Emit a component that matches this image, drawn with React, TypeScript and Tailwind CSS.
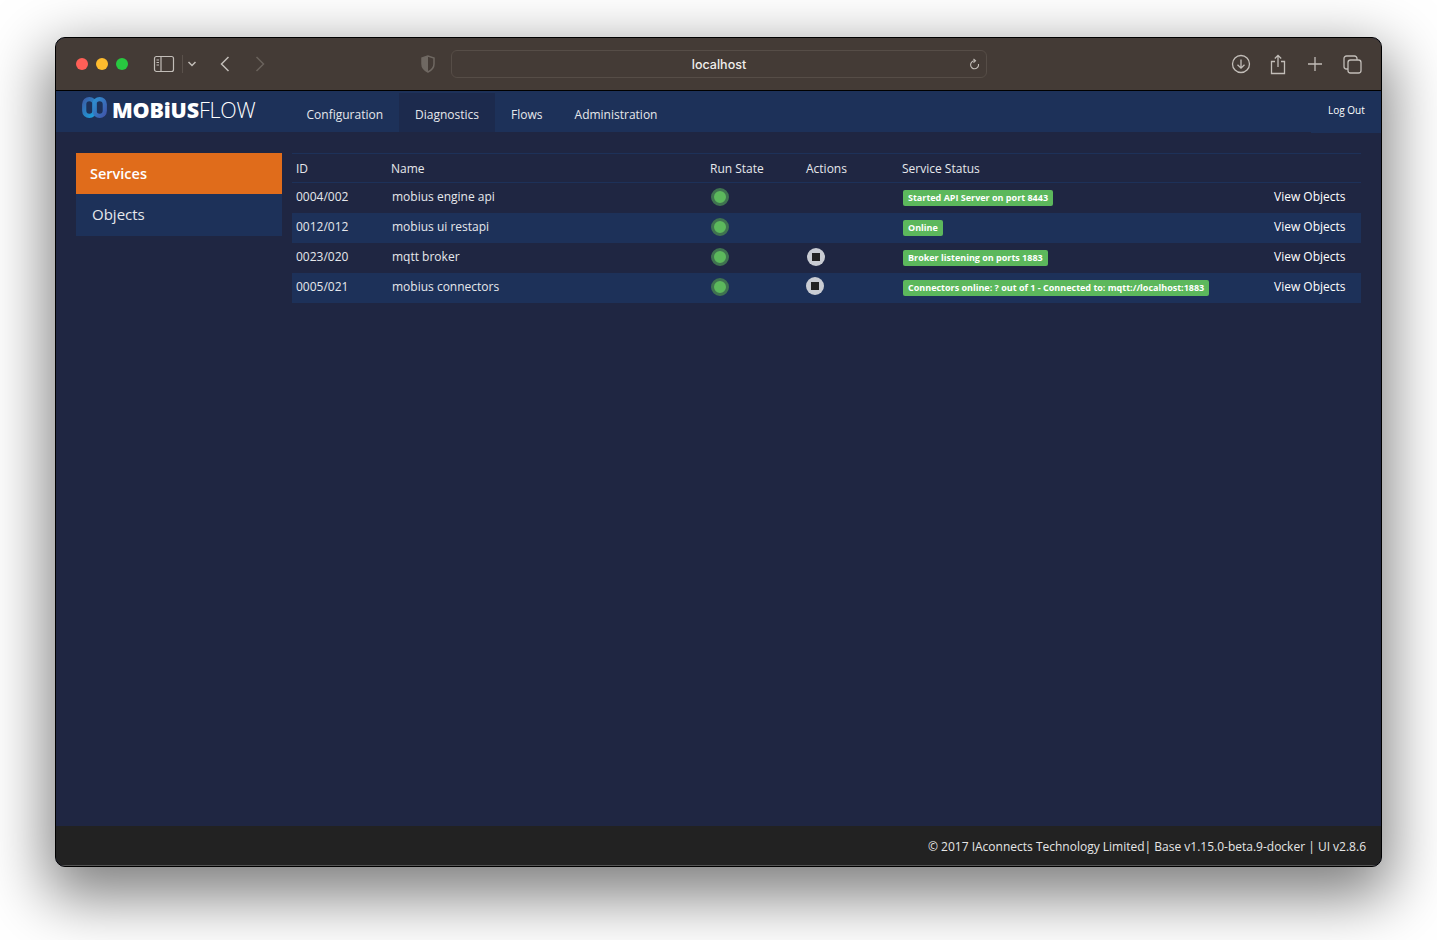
const rows = [
  { id: "0004/002", name: "mobius engine api", action: false, status: "Started API Server on port 8443" },
  { id: "0012/012", name: "mobius ui restapi", action: false, status: "Online" },
  { id: "0023/020", name: "mqtt broker", action: true, status: "Broker listening on ports 1883" },
  { id: "0005/021", name: "mobius connectors", action: true, status: "Connectors online: ? out of 1 - Connected to: mqtt://localhost:1883" },
];

const tabs = [
  { label: "Configuration", active: false },
  { label: "Diagnostics", active: true },
  { label: "Flows", active: false },
  { label: "Administration", active: false },
];

const Toolbar = () => (
  <div className="flex h-[52px] items-center bg-[#443b36] text-[#c2bdb8]">
    {/* traffic lights */}
    <div className="ml-[20px] flex gap-[8px]">
      <span className="h-3 w-3 rounded-full bg-[#ff5f57]" />
      <span className="h-3 w-3 rounded-full bg-[#febc2e]" />
      <span className="h-3 w-3 rounded-full bg-[#28c840]" />
    </div>

    {/* sidebar toggle */}
    <svg className="ml-[25px]" width="22" height="18" viewBox="0 0 22 18" fill="none" stroke="currentColor" strokeWidth="1.2">
      <rect x="1.5" y="1.5" width="19" height="15" rx="2" />
      <path d="M8 1.5v15" />
      <path d="M3.5 5h2.5M3.5 7.5h2.5M3.5 10h2.5" strokeWidth="1" />
    </svg>
    <div className="ml-[7px] h-[18px] w-px bg-[#5a514b]" />
    <svg className="ml-[4px]" width="10" height="8" viewBox="0 0 10 8" fill="none" stroke="currentColor" strokeWidth="1.5">
      <path d="M1.5 2 5 5.5 8.5 2" />
    </svg>

    {/* back and forward */}
    <svg className="ml-[22px]" width="12" height="16" viewBox="0 0 12 16" fill="none" stroke="currentColor" strokeWidth="1.5">
      <path d="M9.5 1 2.5 8l7 7" />
    </svg>
    <svg className="ml-[23px] text-[#6a625c]" width="12" height="16" viewBox="0 0 12 16" fill="none" stroke="currentColor" strokeWidth="1.5">
      <path d="M2.5 1l7 7-7 7" />
    </svg>

    {/* shield */}
    <svg className="ml-[155px] text-[#6f6862]" width="14" height="18" viewBox="0 0 14 18">
      <path d="M7 1 1 3v6c0 4 3 6.500 6 8 3-1.500 6-4 6-8V3Z" fill="none" stroke="currentColor" strokeWidth="1.500" />
      <path d="M7 1 1 3v6c0 4 3 6.500 6 8Z" fill="currentColor" />
    </svg>

    {/* address bar */}
    <div className="ml-[16px] flex h-[28px] w-[536px] items-center rounded-[6px] border border-[#564d47] pl-[18px] pr-[6px]">
      <span className="flex-1 pt-[2px] text-center font-['Inter',sans-serif] text-[12.5px] font-medium text-[#f0eeec]">localhost</span>
      <svg width="12" height="13" viewBox="0 0 12 13" fill="none" stroke="currentColor" strokeWidth="1.100">
        <path d="M7 2.800a4 4 0 1 0 3.500 3.200" />
        <path d="M5.500 1 7.500 2.800 5.500 4.600" />
      </svg>
    </div>

    {/* right hand icons */}
    <svg className="ml-[244px]" width="20" height="20" viewBox="0 0 20 20" fill="none" stroke="currentColor" strokeWidth="1.300">
      <circle cx="10" cy="10" r="8.500" />
      <path d="M10 5.500v8.500M6.500 10.800 10 14.200l3.500-3.400" />
    </svg>
    <svg className="ml-[19px]" width="16" height="21" viewBox="0 0 16 21" fill="none" stroke="currentColor" strokeWidth="1.300">
      <path d="M5 7.500H1.500v12h13v-12H11" />
      <path d="M8 13V1.500M4.800 4.500 8 1.300l3.200 3.200" />
    </svg>
    <svg className="ml-[22px]" width="14" height="14" viewBox="0 0 14 14" fill="none" stroke="currentColor" strokeWidth="1.300">
      <path d="M7 0v14M0 7h14" />
    </svg>
    <svg className="ml-[21px]" width="19" height="19" viewBox="0 0 19 19" fill="none" stroke="currentColor" strokeWidth="1.300">
      <rect x="5" y="5" width="13" height="13" rx="2.500" />
      <path d="M5 14H3.500A2.500 2.500 0 0 1 1 11.500v-8A2.500 2.500 0 0 1 3.500 1h8A2.500 2.500 0 0 1 14 3.500V5" />
    </svg>
  </div>
);

const Logo = () => (
  <div className="ml-[26px] mt-[3px] flex h-[30px] items-center self-start">
    <svg className="-mt-[3px]" width="25" height="21" viewBox="0 0 26 22">
      <defs>
        <linearGradient id="logo-left" x1="0" y1="0" x2="0.8" y2="1">
          <stop offset="0" stopColor="#3a5fa8" />
          <stop offset="1" stopColor="#1e9bd8" />
        </linearGradient>
        <linearGradient id="logo-right" x1="0" y1="0" x2="1" y2="1">
          <stop offset="0" stopColor="#2e8fd0" />
          <stop offset="1" stopColor="#3f57ab" />
        </linearGradient>
      </defs>
      <rect x="2.200" y="2.200" width="10.800" height="17.600" rx="5.400" fill="none" stroke="url(#logo-left)" strokeWidth="4.400" />
      <rect x="13" y="2.200" width="10.800" height="17.600" rx="5.400" fill="none" stroke="url(#logo-right)" strokeWidth="4.400" />
    </svg>
    <span className="ml-[5px] mt-[2px] font-['Open_Sans',sans-serif] text-[21.5px] leading-none tracking-[-0.2px] text-white">
      <span className="font-extrabold">MOBiUS</span>
      <span className="font-light">FLOW</span>
    </span>
  </div>
);

const Nav = () => (
  <div className="flex h-[41px] bg-[#1d3159]">
    <Logo />
    <div className="ml-[35px] flex">
      {tabs.map((tab) => (
        <div
          key={tab.label}
          className={`mt-[2px] flex items-center px-4 pt-[4px] text-[12px] text-[#e6e8ec] ${tab.active ? "bg-[#1c2a4d]" : ""}`}
        >
          {tab.label}
        </div>
      ))}
    </div>
    <div className="ml-auto h-[42px] w-[70px] bg-[#1d3159] pl-[17px] pt-[12px] text-[10px] leading-[15px] text-white">Log Out</div>
  </div>
);

const Sidebar = () => (
  <div className="w-[206px] shrink-0">
    <div className="flex h-[41px] items-center bg-[#e06c1b] pl-[14px] text-[14.5px] font-semibold text-white">Services</div>
    <div className="flex h-[42px] items-center bg-[#1d3159] pb-[2px] pl-[16px] text-[15px] text-[#e6e8ec]">Objects</div>
  </div>
);

const RunDot = () => (
  <span className="block h-[18px] w-[18px] rounded-full border-[3px] border-[#3f7350] bg-[#5cb85c]" />
);

const StopButton = ({ lift }: { lift: boolean }) => (
  <span className={`flex h-[18px] w-[18px] items-center justify-center rounded-full bg-[#c9ccd3] ${lift ? "-ml-px -mt-px" : ""}`}>
    <span className="h-2 w-2 bg-[#222]" />
  </span>
);

const ServiceTable = () => (
  <table className="w-[1069px] table-fixed border-collapse self-start text-left text-[12px] text-[#e6e8ec]">
    <thead>
      <tr className="h-[29px] border-y border-[#1d3159]">
        <th className="w-[95px] pl-1 pt-[1px] font-normal">ID</th>
        <th className="w-[320px] pl-[4px] pt-[1px] font-normal">Name</th>
        <th className="w-[96px] pl-[3px] pt-[1px] font-normal">Run State</th>
        <th className="w-[96px] pl-[3px] pt-[1px] font-normal">Actions</th>
        <th className="w-[376px] pl-[3px] pt-[1px] font-normal">Service Status</th>
        <th className="font-normal" />
      </tr>
    </thead>
    <tbody>
      {rows.map((row, index) => (
        <tr key={row.id} className={`h-[30px] ${index % 2 === 1 ? "bg-[#1d3159]" : ""}`}>
          <td className="pb-[2px] pl-[4px]">{row.id}</td>
          <td className="pb-[2px] pl-[5px]">{row.name}</td>
          <td className="pb-[2px] pl-[4px]"><RunDot /></td>
          <td className="pb-[2px] pl-[4px]">{row.action && <StopButton lift={index === 3} />}</td>
          <td className="pb-[2px] pl-[4px]">
            <span className="inline-block rounded-[2px] bg-[#5cb85c] px-[5px] text-[9px] font-bold leading-[16px] text-white">
              {row.status}
            </span>
          </td>
          <td className="whitespace-nowrap pb-[2px] text-white"><span className="-ml-[1px] block">View Objects</span></td>
        </tr>
      ))}
    </tbody>
  </table>
);

const App = () => (
  <div className="h-[940px] w-[1437px] overflow-hidden bg-white pl-[55px] pt-[37px] font-['Open_Sans',sans-serif]">
    <div className="flex h-[830px] w-[1327px] flex-col overflow-hidden rounded-[10px] border border-black bg-[#1f2642] shadow-[0_22px_60px_8px_rgba(0,0,0,0.5)]">
      <Toolbar />
      <div className="h-px bg-black" />
      <Nav />
      <div className="flex flex-1 gap-[10px] pl-[20px] pt-[21px]">
        <Sidebar />
        <ServiceTable />
      </div>
      <div className="flex h-[40px] items-center justify-end border-b border-[#555] bg-[#222222] pr-[15px] pt-[2px] text-[12px] text-[#e6e6e6]">
        © 2017 IAconnects Technology Limited| Base v1.15.0-beta.9-docker | UI v2.8.6
      </div>
    </div>
  </div>
);

export default App;
